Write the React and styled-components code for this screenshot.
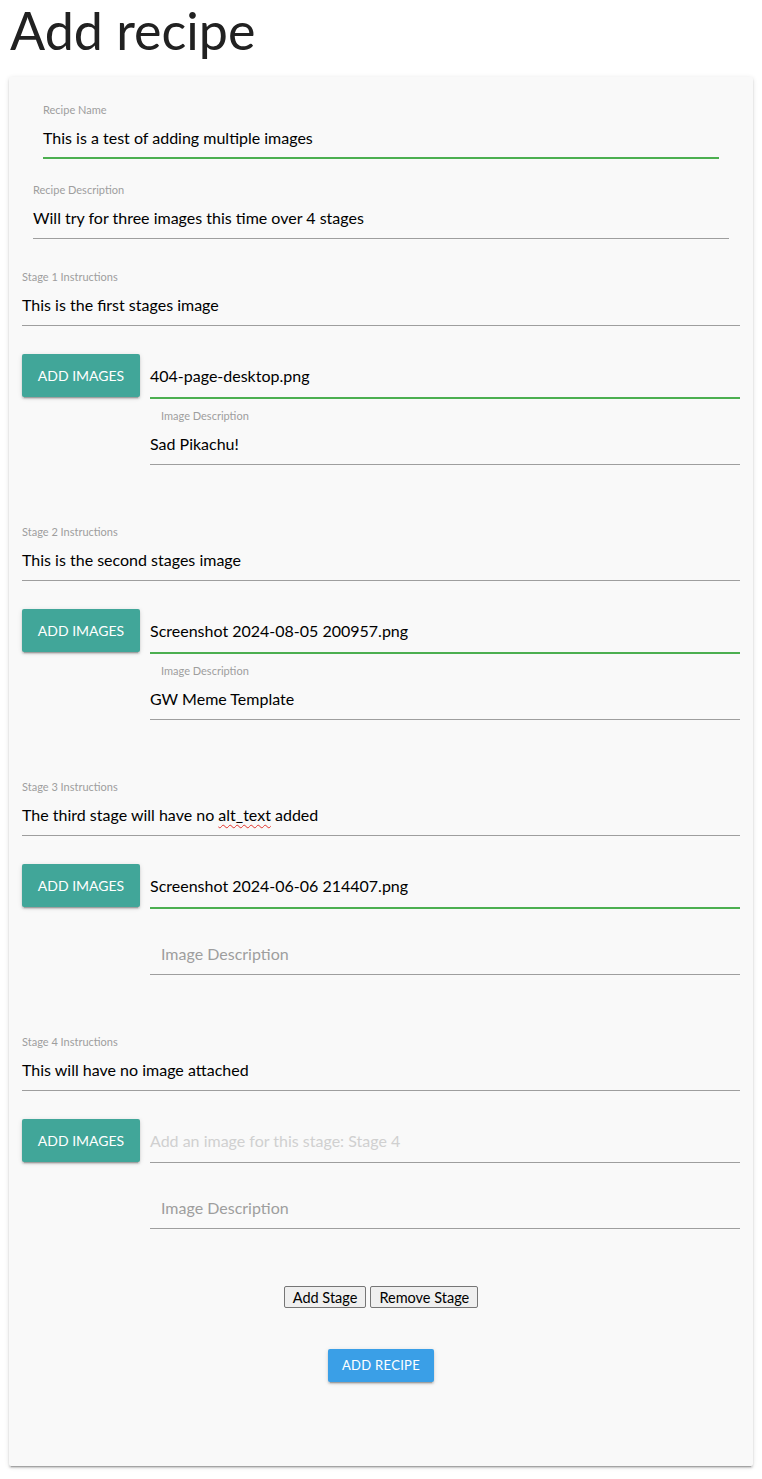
import React from "react";
import styled, { createGlobalStyle } from "styled-components";

const FONT = `"Lato", "Liberation Sans", sans-serif`;

const GlobalStyle = createGlobalStyle`
  html, body { margin: 0; padding: 0; background: #ffffff; }
  body { font-family: ${FONT}; color: #000; }
  * { box-sizing: border-box; }
`;

const Page = styled.div`
  padding: 0 9px 13px 9px;
  width: 762px;
`;

const Title = styled.h1`
  margin: 0 0 0 1px;
  font-family: ${FONT};
  font-weight: 400;
  font-size: 52px;
  line-height: 60px;
  color: #212121;
  height: 77px;
`;

const Card = styled.div`
  width: 744px;
  background: #f9f9f9;
  border-radius: 2px;
  box-shadow: 0 2px 2px 0 rgba(0, 0, 0, 0.14), 0 1px 5px 0 rgba(0, 0, 0, 0.12),
    0 3px 1px -2px rgba(0, 0, 0, 0.2);
  padding: 23px 13px 84px 13px;
  display: flex;
  flex-direction: column;
`;

const Field = styled.div`
  display: flex;
  flex-direction: column;
  margin: ${(p) => p.$margin || "0"};
`;

const Label = styled.div`
  font-size: 11px;
  line-height: 16px;
  height: 18px;
  padding-top: 2px;
  color: #9e9e9e;
  padding-left: ${(p) => p.$indent || 0}px;
`;

const Value = styled.div`
  font-size: 16px;
  height: ${(p) => p.$h || 41}px;
  line-height: ${(p) => (p.$h || 41) - 1}px;
  color: ${(p) => (p.$placeholder ? p.$placeholder : "#000")};
  padding-left: ${(p) => p.$indent || 0}px;
  border-bottom: ${(p) => (p.$valid ? "2px solid #4caf50" : "1px solid #9e9e9e")};
  white-space: nowrap;
`;

const Misspelled = styled.span`
  text-decoration: underline wavy #e0322a;
  text-decoration-thickness: 1px;
  text-underline-offset: 3px;
`;

const Stage = styled.div`
  display: flex;
  flex-direction: column;
  margin-top: 28px;
  margin-bottom: ${(p) => (p.$last ? 57 : 29)}px;
`;

const ImageRow = styled.div`
  display: flex;
  align-items: flex-start;
  gap: 10px;
  margin-top: 28px;
`;

const AddImagesButton = styled.div`
  flex: 0 0 118px;
  height: 43px;
  background: #41a699;
  color: #fff;
  font-size: 14px;
  line-height: 43px;
  text-align: center;
  text-transform: uppercase;
  border-radius: 2px;
  box-shadow: 0 2px 2px 0 rgba(0, 0, 0, 0.14), 0 1px 5px 0 rgba(0, 0, 0, 0.12),
    0 3px 1px -2px rgba(0, 0, 0, 0.2);
`;

const ImageCol = styled.div`
  flex: 1;
  display: flex;
  flex-direction: column;
`;

const FileValue = styled.div`
  height: ${(p) => (p.$valid ? 45 : 44)}px;
  line-height: 43px;
  font-size: 16px;
  color: ${(p) => (p.$placeholder ? "#d0d0d0" : "#000")};
  border-bottom: ${(p) => (p.$valid ? "2px solid #4caf50" : "1px solid #9e9e9e")};
  white-space: nowrap;
`;

const StageButtons = styled.div`
  display: flex;
  justify-content: center;
  gap: 4px;
`;

const NativeButton = styled.button`
  font-family: ${FONT};
  font-size: 14.5px;
  height: 22px;
  padding: 0 8px;
  background: #efefef;
  border: 1px solid #767676;
  border-radius: 2px;
  color: #000;
`;

const SubmitRow = styled.div`
  display: flex;
  justify-content: center;
  margin-top: 41px;
`;

const SubmitButton = styled.div`
  width: 106px;
  height: 33px;
  background: #3a9fe7;
  color: #fff;
  font-size: 13px;
  line-height: 33px;
  text-align: center;
  text-transform: uppercase;
  letter-spacing: 0.3px;
  border-radius: 2px;
  box-shadow: 0 2px 2px 0 rgba(0, 0, 0, 0.14), 0 1px 5px 0 rgba(0, 0, 0, 0.12),
    0 3px 1px -2px rgba(0, 0, 0, 0.2);
`;

const stages = [
  {
    n: 1,
    text: "This is the first stages image",
    file: "404-page-desktop.png",
    desc: "Sad Pikachu!",
  },
  {
    n: 2,
    text: "This is the second stages image",
    file: "Screenshot 2024-08-05 200957.png",
    desc: "GW Meme Template",
  },
  {
    n: 3,
    text: (
      <>
        The third stage will have no <Misspelled>alt_text</Misspelled> added
      </>
    ),
    file: "Screenshot 2024-06-06 214407.png",
    desc: null,
  },
  {
    n: 4,
    text: "This will have no image attached",
    file: null,
    desc: null,
  },
];

function StageBlock({ stage, last }) {
  return (
    <Stage $last={last}>
      <Field>
        <Label>Stage {stage.n} Instructions</Label>
        <Value>{stage.text}</Value>
      </Field>
      <ImageRow>
        <AddImagesButton>Add Images</AddImagesButton>
        <ImageCol>
          {stage.file ? (
            <FileValue $valid>{stage.file}</FileValue>
          ) : (
            <FileValue $placeholder>
              Add an image for this stage: Stage {stage.n}
            </FileValue>
          )}
          <Field $margin="7px 0 0 0">
            {stage.desc ? (
              <>
                <Label $indent={11}>Image Description</Label>
                <Value>{stage.desc}</Value>
              </>
            ) : (
              <>
                <Label />
                <Value $indent={11} $placeholder="#9e9e9e">
                  Image Description
                </Value>
              </>
            )}
          </Field>
        </ImageCol>
      </ImageRow>
    </Stage>
  );
}

export default function App() {
  return (
    <>
      <GlobalStyle />
      <Page>
        <Title>Add recipe</Title>
        <Card>
          <Field $margin="0 21px">
            <Label>Recipe Name</Label>
            <Value $valid>This is a test of adding multiple images</Value>
          </Field>
          <Field $margin="21px 11px 0 11px">
            <Label>Recipe Description</Label>
            <Value>Will try for three images this time over 4 stages</Value>
          </Field>
          {stages.map((s, i) => (
            <StageBlock key={s.n} stage={s} last={i === stages.length - 1} />
          ))}
          <StageButtons>
            <NativeButton type="button">Add Stage</NativeButton>
            <NativeButton type="button">Remove Stage</NativeButton>
          </StageButtons>
          <SubmitRow>
            <SubmitButton>Add Recipe</SubmitButton>
          </SubmitRow>
        </Card>
      </Page>
    </>
  );
}
